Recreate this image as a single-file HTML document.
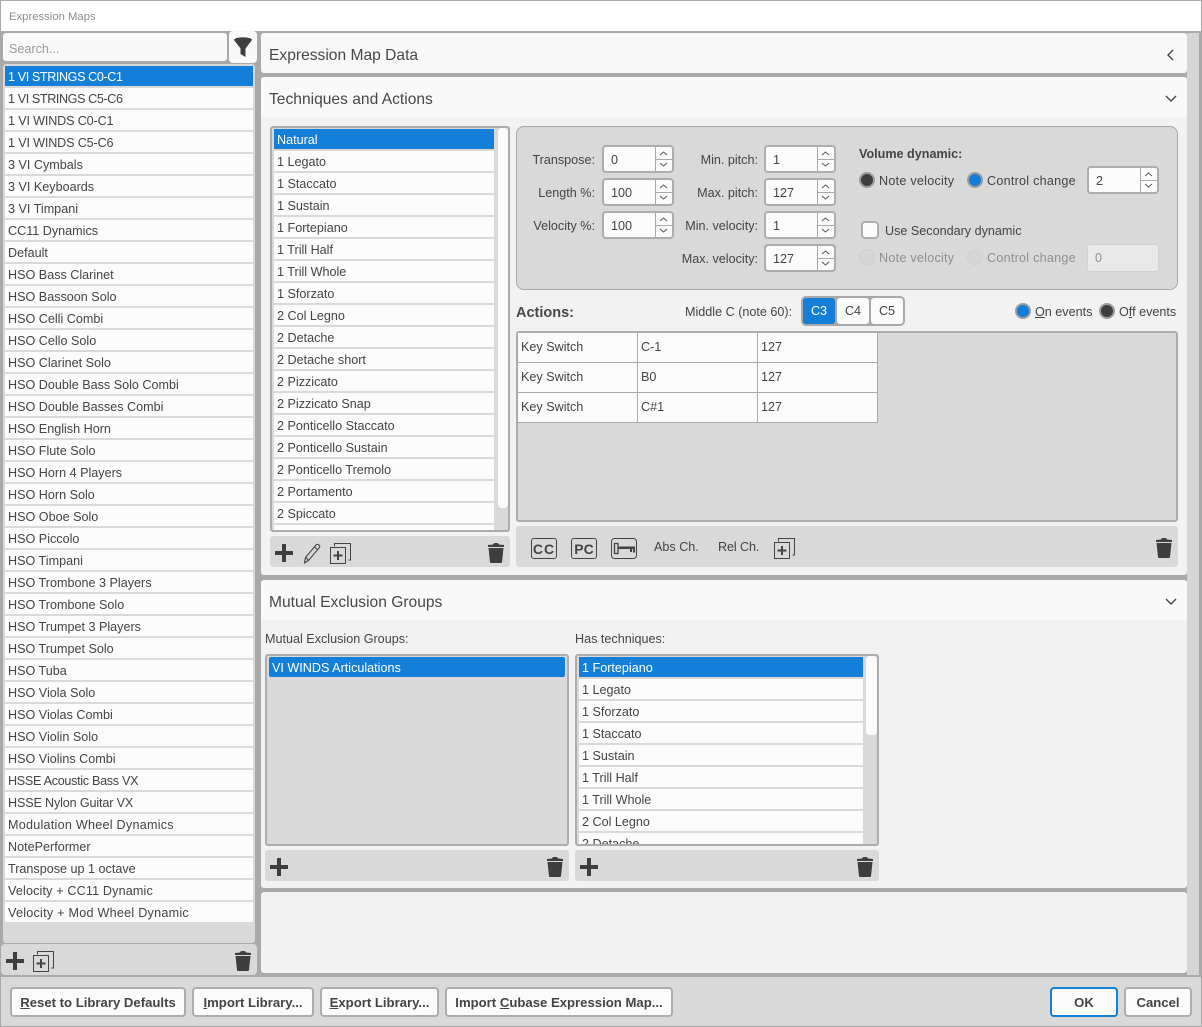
<!DOCTYPE html>
<html><head><meta charset="utf-8"><style>
*{box-sizing:border-box;margin:0;padding:0}
html,body{width:1202px;height:1027px;overflow:hidden}
body{position:relative;background:#a9a9a9;font:12.6px "Liberation Sans",sans-serif;color:#444}
.a{position:absolute}
.t{position:absolute;white-space:nowrap;line-height:18px;height:18px}
.r{text-align:right}
.list div{height:20px;margin-bottom:2px;background:#fbfbfb;padding-left:3px;line-height:22px;white-space:nowrap;overflow:hidden}
.list div.s{background:#137fd9;color:#fff}
.h{font-size:15.6px;color:#474747}
.sp{position:absolute;width:72px;height:28px;border:2px solid #adadad;border-radius:4px;background:#fbfbfb;line-height:26px;padding-left:7px}
.sp i{position:absolute;right:0;top:0;width:17px;height:24px;border-left:1px solid #a9a9a9}
.sp i:before{content:"";position:absolute;left:0;right:0;top:12px;border-top:1px solid #a9a9a9}
.sp svg{position:absolute;right:0;top:0}
.rd{position:absolute;width:16px;height:16px;border-radius:50%;border:2px solid #9c9c9c}
.b{background:#137fd9}.d{background:#3e3e3e}.off{background:#d5d5d5;border:1px solid #cfcfcf}
.btn{position:absolute;top:987px;height:30px;background:#fbfbfb;border:2px solid #adadad;border-radius:4px;text-align:center;line-height:27px;color:#444;font-weight:bold;font-size:13.15px;white-space:nowrap}
u{text-decoration:underline}
table{border-collapse:collapse}
td{border:1px solid #a9a9a9;background:#fbfbfb;height:30px;width:120px;padding:0 0 2px 3px}
.w{letter-spacing:.25px}
</style></head><body>
<div class="a" style="left:1px;top:1px;width:1200px;height:30px;background:#fff"></div>
<div class="t" style="left:9px;top:8px;font-size:11.3px;color:#8d8d8d">Expression Maps</div>
<div class="a" style="left:1187px;top:33px;width:12px;height:942px;background:#d6d6d6"></div>

<!-- left -->
<div class="a" style="left:3px;top:33px;width:224px;height:28px;background:#f9f9f9;border-radius:3px"></div>
<div class="t" style="left:9px;top:40px;color:#999">Search...</div>
<div class="a" style="left:229px;top:31px;width:28px;height:32px;background:#f9f9f9;border-radius:4px"></div>
<svg class="a" style="left:234px;top:37px" width="18" height="21" viewBox="0 0 18 21"><path d="M0 3C0-.5 18-.5 18 3L11.500 11.500V20L6.500 17V11.500Z" fill="#3e3e3e"/></svg>
<div class="a list" style="left:3px;top:64px;width:252px;height:879px;background:#d9d9d9;padding:2px;border-radius:3px">
<div class="s" style="letter-spacing:-.4px">1 VI STRINGS C0-C1</div><div style="letter-spacing:-.4px">1 VI STRINGS C5-C6</div><div style="letter-spacing:-.15px">1 VI WINDS C0-C1</div><div style="letter-spacing:-.15px">1 VI WINDS C5-C6</div><div>3 VI Cymbals</div><div>3 VI Keyboards</div><div>3 VI Timpani</div><div>CC11 Dynamics</div><div>Default</div><div>HSO Bass Clarinet</div><div>HSO Bassoon Solo</div><div>HSO Celli Combi</div><div>HSO Cello Solo</div><div>HSO Clarinet Solo</div><div>HSO Double Bass Solo Combi</div><div>HSO Double Basses Combi</div><div>HSO English Horn</div><div>HSO Flute Solo</div><div>HSO Horn 4 Players</div><div>HSO Horn Solo</div><div>HSO Oboe Solo</div><div>HSO Piccolo</div><div>HSO Timpani</div><div>HSO Trombone 3 Players</div><div>HSO Trombone Solo</div><div>HSO Trumpet 3 Players</div><div>HSO Trumpet Solo</div><div>HSO Tuba</div><div>HSO Viola Solo</div><div>HSO Violas Combi</div><div>HSO Violin Solo</div><div>HSO Violins Combi</div><div style="letter-spacing:-.3px">HSSE Acoustic Bass VX</div><div style="letter-spacing:-.15px">HSSE Nylon Guitar VX</div><div class="w">Modulation Wheel Dynamics</div><div>NotePerformer</div><div>Transpose up 1 octave</div><div style="letter-spacing:.15px">Velocity + CC11 Dynamic</div><div class="w">Velocity + Mod Wheel Dynamic</div>
</div>
<div class="a" style="left:1px;top:944px;width:256px;height:31px;background:#d9d9d9;border-radius:4px"></div>
<svg class="a" style="left:6px;top:952px" width="18" height="18"><path d="M7 0h4v7h7v4h-7v7H7v-7H0V7h7z" fill="#3e3e3e"/></svg>
<svg class="a" style="left:33px;top:951px" width="21" height="21" fill="none" stroke="#444"><path d="M4.500 3.500V.5h16v16.500h-2"/><path d="M.5 4.500h15v16H.5z"/><path d="M8 8v9M3.500 12.500h9" stroke-width="2"/></svg>
<svg class="a" style="left:235px;top:951px" width="16" height="20"><path d="M5 1.500Q5.500 0 7 0h2q1.500 0 2 1.500L16 2V4H0V2zM.5 5h15l-1.500 14q-.1 1-1 1H3q-1 0-1-1z" fill="#3e3e3e"/></svg>

<!-- right panels -->
<div class="a" style="left:261px;top:33px;width:926px;height:40px;background:#f8f8f8;border-radius:3px"></div>
<div class="t h" style="left:269px;top:47px">Expression Map Data</div>
<svg class="a" style="left:1166px;top:49px" width="10" height="12" fill="none" stroke="#444" stroke-width="1.400"><path d="M7 1 2 6l5 5"/></svg>
<div class="a" style="left:261px;top:77px;width:926px;height:498px;background:#f2f2f2;border-radius:3px"></div>
<div class="a" style="left:261px;top:77px;width:926px;height:40px;background:#f9f9f9;border-radius:3px"></div>
<div class="t h" style="left:269px;top:91px">Techniques and Actions</div>
<svg class="a" style="left:1165px;top:94px" width="12" height="10" fill="none" stroke="#444" stroke-width="1.400"><path d="M1 2l5 5 5-5"/></svg>

<!-- techniques list -->
<div class="a" style="left:270px;top:126px;width:240px;height:406px;background:#d9d9d9;border:2px solid #adadad;border-radius:3px;overflow:hidden">
<div class="a list" style="left:2px;top:1px;width:220px">
<div class="s">Natural</div><div>1 Legato</div><div>1 Staccato</div><div>1 Sustain</div><div>1 Fortepiano</div><div>1 Trill Half</div><div>1 Trill Whole</div><div>1 Sforzato</div><div>2 Col Legno</div><div>2 Detache</div><div>2 Detache short</div><div>2 Pizzicato</div><div>2 Pizzicato Snap</div><div>2 Ponticello Staccato</div><div>2 Ponticello Sustain</div><div>2 Ponticello Tremolo</div><div>2 Portamento</div><div>2 Spiccato</div><div></div>
</div>
<div class="a" style="left:226px;top:0;width:10px;height:380px;background:#fbfbfb;border-radius:4px"></div>
</div>
<div class="a" style="left:270px;top:536px;width:240px;height:31px;background:#d9d9d9;border-radius:3px"></div>
<svg class="a" style="left:275px;top:544px" width="18" height="18"><path d="M7 0h4v7h7v4h-7v7H7v-7H0V7h7z" fill="#3e3e3e"/></svg>
<svg class="a" style="left:303px;top:543px" width="18" height="21" fill="none" stroke="#444" stroke-width="1.100"><path d="M2.500 14.500 13 2c1-1 2-1 3 0s1 2 0 3L5.500 17.500 1.500 20zM3 14.500l2.500 3M11.500 4l3 2.500"/></svg>
<svg class="a" style="left:330px;top:543px" width="21" height="21" fill="none" stroke="#444"><path d="M4.500 3.500V.5h16v16.500h-2"/><path d="M.5 4.500h15v16H.5z"/><path d="M8 8v9M3.500 12.500h9" stroke-width="2"/></svg>
<svg class="a" style="left:488px;top:543px" width="16" height="20"><path d="M5 1.500Q5.500 0 7 0h2q1.500 0 2 1.500L16 2V4H0V2zM.5 5h15l-1.500 14q-.1 1-1 1H3q-1 0-1-1z" fill="#3e3e3e"/></svg>

<!-- settings box -->
<div class="a" style="left:516px;top:126px;width:662px;height:164px;background:#d9d9d9;border:1px solid #a9a9a9;border-radius:8px"></div>
<div class="t r" style="left:500px;width:95px;top:151px">Transpose:</div>
<div class="t r" style="left:500px;width:95px;top:184px">Length %:</div>
<div class="t r" style="left:500px;width:95px;top:217px">Velocity %:</div>
<div class="t r" style="left:660px;width:98px;top:151px">Min. pitch:</div>
<div class="t r" style="left:660px;width:98px;top:184px">Max. pitch:</div>
<div class="t r" style="left:660px;width:98px;top:217px">Min. velocity:</div>
<div class="t r" style="left:660px;width:98px;top:250px">Max. velocity:</div>
<div class="sp" style="left:602px;top:145px">0<i></i><svg width="17" height="24" fill="none" stroke="#555"><path d="M5 8l3.500-3L12 8M5 16l3.500 3 3.500-3"/></svg></div>
<div class="sp" style="left:602px;top:178px">100<i></i><svg width="17" height="24" fill="none" stroke="#555"><path d="M5 8l3.500-3L12 8M5 16l3.500 3 3.500-3"/></svg></div>
<div class="sp" style="left:602px;top:211px">100<i></i><svg width="17" height="24" fill="none" stroke="#555"><path d="M5 8l3.500-3L12 8M5 16l3.500 3 3.500-3"/></svg></div>
<div class="sp" style="left:764px;top:145px">1<i></i><svg width="17" height="24" fill="none" stroke="#555"><path d="M5 8l3.500-3L12 8M5 16l3.500 3 3.500-3"/></svg></div>
<div class="sp" style="left:764px;top:178px">127<i></i><svg width="17" height="24" fill="none" stroke="#555"><path d="M5 8l3.500-3L12 8M5 16l3.500 3 3.500-3"/></svg></div>
<div class="sp" style="left:764px;top:211px">1<i></i><svg width="17" height="24" fill="none" stroke="#555"><path d="M5 8l3.500-3L12 8M5 16l3.500 3 3.500-3"/></svg></div>
<div class="sp" style="left:764px;top:244px">127<i></i><svg width="17" height="24" fill="none" stroke="#555"><path d="M5 8l3.500-3L12 8M5 16l3.500 3 3.500-3"/></svg></div>
<div class="t" style="left:859px;top:145px;font-weight:bold">Volume dynamic:</div>
<div class="rd d" style="left:859px;top:172px"></div><div class="t w" style="left:879px;top:172px">Note velocity</div>
<div class="rd b" style="left:967px;top:172px"></div><div class="t w" style="left:987px;top:172px">Control change</div>
<div class="sp" style="left:1087px;top:166px">2<i></i><svg width="17" height="24" fill="none" stroke="#555"><path d="M5 8l3.500-3L12 8M5 16l3.500 3 3.500-3"/></svg></div>
<div class="a" style="left:861px;top:221px;width:18px;height:18px;background:#fbfbfb;border:2px solid #adadad;border-radius:4px"></div>
<div class="t" style="left:885px;top:222px">Use Secondary dynamic</div>
<div class="rd off" style="left:859px;top:249px"></div><div class="t w" style="left:879px;top:249px;color:#8f8f8f">Note velocity</div>
<div class="rd off" style="left:967px;top:249px"></div><div class="t w" style="left:987px;top:249px;color:#8f8f8f">Control change</div>
<div class="a" style="left:1087px;top:244px;width:72px;height:28px;background:#e9e9e9;border:1px solid #d2d2d2;border-radius:3px;padding-left:7px;line-height:27px;color:#8f8f8f">0</div>

<!-- actions -->
<div class="t" style="left:516px;top:304px;font-weight:bold;font-size:14.5px;color:#474747">Actions:</div>
<div class="t" style="left:685px;top:303px">Middle C (note 60):</div>
<div class="a" style="left:801px;top:296px;width:104px;height:30px;background:#a9a9a9;border-radius:5px"></div>
<div class="a" style="left:803px;top:298px;width:32px;height:26px;background:#137fd9;color:#fff;text-align:center;line-height:27px;border-radius:3px">C3</div>
<div class="a" style="left:837px;top:298px;width:32px;height:26px;background:#fbfbfb;text-align:center;line-height:27px;border-radius:3px">C4</div>
<div class="a" style="left:871px;top:298px;width:32px;height:26px;background:#fbfbfb;text-align:center;line-height:27px;border-radius:3px">C5</div>
<div class="rd b" style="left:1015px;top:303px"></div><div class="t" style="left:1035px;top:303px"><u>O</u>n events</div>
<div class="rd d" style="left:1099px;top:303px"></div><div class="t" style="left:1119px;top:303px">O<u>f</u>f events</div>
<div class="a" style="left:516px;top:331px;width:662px;height:191px;background:#d9d9d9;border:2px solid #adadad;border-radius:3px">
<table style="margin-top:-1px;margin-left:-1px"><tr><td>Key Switch</td><td>C-1</td><td>127</td></tr><tr><td>Key Switch</td><td>B0</td><td>127</td></tr><tr><td>Key Switch</td><td>C#1</td><td>127</td></tr></table>
</div>
<div class="a" style="left:516px;top:526px;width:662px;height:41px;background:#d9d9d9;border-radius:3px"></div>
<div class="a" style="left:531px;top:538px;width:26px;height:21px;border:1px solid #444;border-radius:3px;text-align:center;font-weight:bold;font-size:14px;line-height:20px;letter-spacing:1px">CC</div>
<div class="a" style="left:571px;top:538px;width:26px;height:21px;border:1px solid #444;border-radius:3px;text-align:center;font-weight:bold;font-size:14px;line-height:20px">PC</div>
<svg class="a" style="left:611px;top:538px" width="26" height="21"><rect x=".5" y=".5" width="25" height="20" rx="3" fill="none" stroke="#444"/><rect x="3.500" y="5.500" width="3.500" height="10" fill="none" stroke="#444" stroke-width="1.300"/><path d="M7 8.500h17v6h-2v-3.500h-1v3h-2v-3H7z" fill="#444"/></svg>
<div class="t" style="left:654px;top:538px">Abs Ch.</div>
<div class="t" style="left:718px;top:538px;letter-spacing:-.1px">Rel Ch.</div>
<svg class="a" style="left:774px;top:538px" width="21" height="21" fill="none" stroke="#444"><path d="M4.500 3.500V.5h16v16.500h-2"/><path d="M.5 4.500h15v16H.5z"/><path d="M8 8v9M3.500 12.500h9" stroke-width="2"/></svg>
<svg class="a" style="left:1156px;top:538px" width="16" height="20"><path d="M5 1.500Q5.500 0 7 0h2q1.500 0 2 1.500L16 2V4H0V2zM.5 5h15l-1.500 14q-.1 1-1 1H3q-1 0-1-1z" fill="#3e3e3e"/></svg>

<!-- mutual -->
<div class="a" style="left:261px;top:580px;width:926px;height:308px;background:#f2f2f2;border-radius:3px"></div>
<div class="a" style="left:261px;top:580px;width:926px;height:40px;background:#f9f9f9;border-radius:3px"></div>
<div class="t h" style="left:269px;top:594px">Mutual Exclusion Groups</div>
<svg class="a" style="left:1165px;top:597px" width="12" height="10" fill="none" stroke="#444" stroke-width="1.400"><path d="M1 2l5 5 5-5"/></svg>
<div class="t" style="left:265px;top:630px">Mutual Exclusion Groups:</div>
<div class="t" style="left:575px;top:630px">Has techniques:</div>
<div class="a list" style="left:265px;top:654px;width:304px;height:192px;background:#d9d9d9;border:2px solid #adadad;border-radius:3px;padding:1px 2px"><div class="s" style="border-radius:2px">VI WINDS Articulations</div></div>
<div class="a" style="left:265px;top:850px;width:304px;height:31px;background:#d9d9d9;border-radius:3px"></div>
<svg class="a" style="left:270px;top:858px" width="18" height="18"><path d="M7 0h4v7h7v4h-7v7H7v-7H0V7h7z" fill="#3e3e3e"/></svg>
<svg class="a" style="left:547px;top:857px" width="16" height="20"><path d="M5 1.500Q5.500 0 7 0h2q1.500 0 2 1.500L16 2V4H0V2zM.5 5h15l-1.500 14q-.1 1-1 1H3q-1 0-1-1z" fill="#3e3e3e"/></svg>
<div class="a" style="left:575px;top:654px;width:304px;height:192px;background:#d9d9d9;border:2px solid #adadad;border-radius:3px;overflow:hidden">
<div class="a list" style="left:2px;top:1px;width:284px"><div class="s">1 Fortepiano</div><div>1 Legato</div><div>1 Sforzato</div><div>1 Staccato</div><div>1 Sustain</div><div>1 Trill Half</div><div>1 Trill Whole</div><div>2 Col Legno</div><div>2 Detache</div></div>
<div class="a" style="left:289px;top:0;width:11px;height:79px;background:#fbfbfb;border-radius:4px"></div>
</div>
<div class="a" style="left:575px;top:850px;width:304px;height:31px;background:#d9d9d9;border-radius:3px"></div>
<svg class="a" style="left:580px;top:858px" width="18" height="18"><path d="M7 0h4v7h7v4h-7v7H7v-7H0V7h7z" fill="#3e3e3e"/></svg>
<svg class="a" style="left:857px;top:857px" width="16" height="20"><path d="M5 1.500Q5.500 0 7 0h2q1.500 0 2 1.500L16 2V4H0V2zM.5 5h15l-1.500 14q-.1 1-1 1H3q-1 0-1-1z" fill="#3e3e3e"/></svg>

<div class="a" style="left:261px;top:892px;width:926px;height:81px;background:#f2f2f2;border-radius:3px"></div>

<!-- bottom -->
<div class="a" style="left:1px;top:977px;width:1200px;height:49px;background:#d9d9d9"></div>
<div class="btn" style="left:10px;width:176px"><u>R</u>eset to Library Defaults</div>
<div class="btn" style="left:192px;width:122px"><u>I</u>mport Library...</div>
<div class="btn" style="left:320px;width:119px"><u>E</u>xport Library...</div>
<div class="btn" style="left:445px;width:228px">Import <u>C</u>ubase Expression Map...</div>
<div class="btn" style="left:1050px;width:68px;border-color:#137fd9">OK</div>
<div class="btn" style="left:1124px;width:68px">Cancel</div>
</body></html>
